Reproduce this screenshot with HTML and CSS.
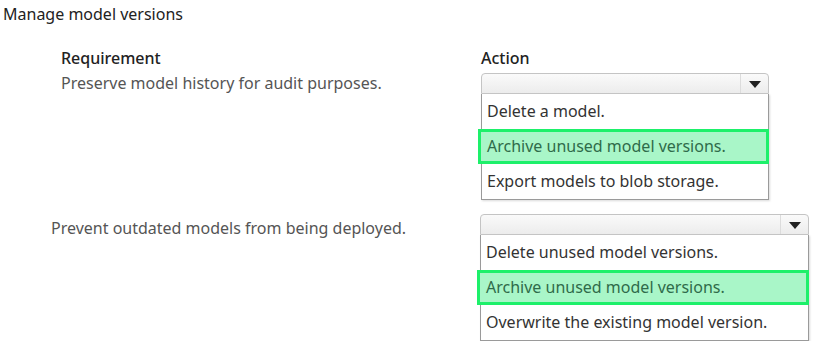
FILE: index.html
```html
<!DOCTYPE html>
<html lang="en">
<head>
    <meta charset="UTF-8">
    <title>Manage model versions</title>
    <link rel="stylesheet" href="styles.css">
</head>
<body>
    <h1 class="title">Manage model versions</h1>

    <div class="row first">
        <div class="req">
            <h3>Requirement</h3>
            <p>Preserve model history for audit purposes.</p>
        </div>
        <div class="action">
            <h3>Action</h3>
            <div class="dropdown">
                <div class="select"><span class="arrow"></span></div>
                <ul class="options">
                    <li>Delete a model.</li>
                    <li class="picked">Archive unused model versions.</li>
                    <li>Export models to blob storage.</li>
                </ul>
            </div>
        </div>
    </div>

    <div class="row second">
        <div class="req">
            <p>Prevent outdated models from being deployed.</p>
        </div>
        <div class="action">
            <div class="dropdown">
                <div class="select"><span class="arrow"></span></div>
                <ul class="options">
                    <li>Delete unused model versions.</li>
                    <li class="picked">Archive unused model versions.</li>
                    <li>Overwrite the existing model version.</li>
                </ul>
            </div>
        </div>
    </div>
</body>
</html>
```

FILE: styles.css
```css
body {
    margin: 0;
    font-family: "Noto Sans", "Open Sans", sans-serif;
    background-color: #fff;
    color: #333;
}

.title {
    margin: 0;
    padding: 4px 0 0 3px;
    font-size: 16px;
    font-weight: normal;
    line-height: 20px;
    color: #222;
}

.row {
    display: flex;
}

.row.first {
    margin-top: 24px;
}

.row.second {
    margin-top: 14px;
}

.req h3,
.action h3 {
    margin: 0;
    font-size: 16px;
    font-weight: 500;
    line-height: 20px;
    color: #222;
}

.req p {
    margin: 5px 0 0;
    font-size: 16px;
    line-height: 20px;
    color: #555;
}

.first .req {
    width: 420px;
    padding-left: 61px;
}

.second .req {
    width: 429px;
    padding-left: 51px;
}

.second .req p {
    margin-top: 4px;
}

.first .action {
    width: 288px;
}

.second .action {
    width: 329px;
}

.first .dropdown {
    margin-top: 5px;
}

.select {
    height: 19px;
    border: 1px solid #c4c4c4;
    border-radius: 4px 4px 0 0;
    background: linear-gradient(#fafafa, #ececec);
    position: relative;
}

.arrow {
    position: absolute;
    right: 0;
    top: 0;
    width: 27px;
    height: 19px;
    border-left: 1px solid #dcdcdc;
}

.arrow::after {
    content: "";
    position: absolute;
    left: 8px;
    top: 7px;
    border-left: 6px solid transparent;
    border-right: 6px solid transparent;
    border-top: 7px solid #222;
}

.options {
    list-style: none;
    margin: 0;
    padding: 0;
    border: 1px solid #9a9a9a;
    border-top: none;
    box-shadow: 1px 1px 2px rgba(0, 0, 0, 0.15);
}

.options li {
    height: 35px;
    line-height: 35px;
    padding-left: 5px;
    font-size: 16px;
    color: #333;
}

.options li.picked {
    height: 29px;
    line-height: 29px;
    margin: 0 -1px 0 -4px;
    padding-left: 6px;
    border: 3px solid #1df06a;
    background-color: #a9f6c8;
    color: #2f6b4a;
}
```
